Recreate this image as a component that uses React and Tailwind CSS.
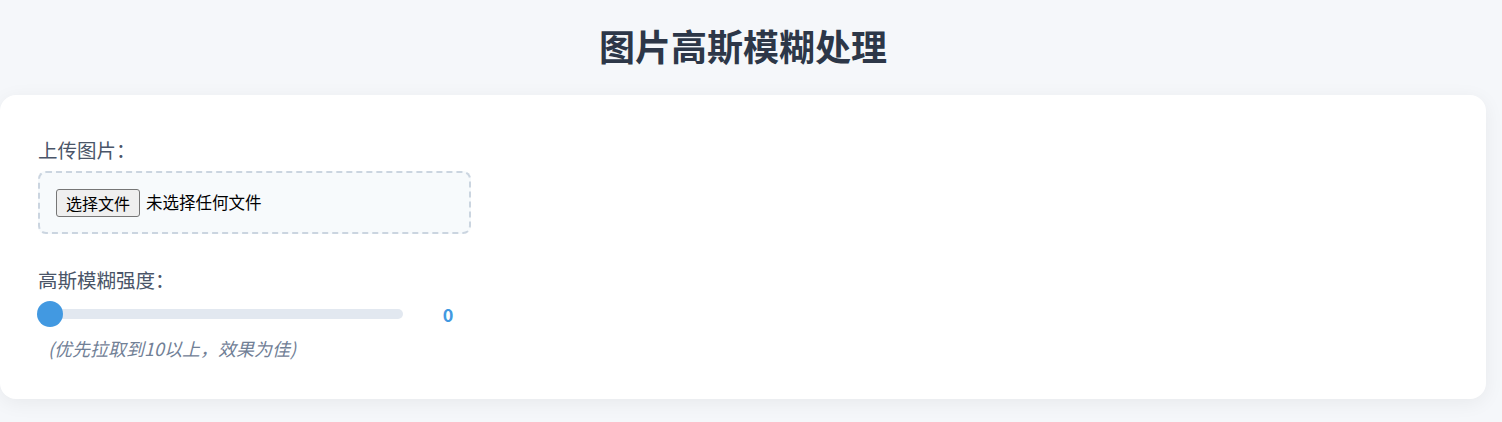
const font = { fontFamily: '"Noto Sans CJK SC", "Noto Sans", sans-serif' };

const Slider = ({ value }) => (
    <div className="flex items-center h-[26px]">
        <div className="relative w-[365px] h-[10px] rounded-full bg-[#e2e8f0]">
            {/* thumb sits over the track */}
            <div className="absolute -left-px top-1/2 -translate-y-1/2 w-[26px] h-[26px] rounded-full bg-[#4299e1]" />
        </div>
        <span className="ml-[20px] min-w-[50px] text-center text-[18px] font-bold text-[#4299e1]">{value}</span>
    </div>
);

const App = () => {
    return (
        <div className="min-h-screen bg-[#f5f7fa] pt-[24px]" style={font}>
            <h1 className="w-[1486px] text-center text-[36px] leading-[43px] font-bold text-[#2d3748] mb-[28px]">
                图片高斯模糊处理
            </h1>

            <div className="w-[1486px] bg-white rounded-[16px] shadow-[0_4px_20px_rgba(0,0,0,0.06)] pt-[41px] pb-[38px] px-[38px]">
                <label className="block text-[19.5px] leading-[27px] text-[#4a5568] mb-2">上传图片：</label>
                <div className="w-[433px] h-[63px] flex items-center px-4 border-2 border-dashed border-[#cbd5e0] rounded-[8px] bg-[#f7fafc]">
                    <button className="h-[28px] px-[9px] text-[16px] leading-none text-black bg-[#efefef] border border-[#767676] rounded-[3px]">
                        选择文件
                    </button>
                    <span className="ml-[6px] text-[16.5px] text-black">未选择任何文件</span>
                </div>

                <label className="block mt-[32px] text-[19.5px] leading-[27px] text-[#4a5568]">高斯模糊强度：</label>
                <div className="mt-2">
                    <Slider value={0} />
                </div>
                <p className="mt-[9px] pl-[10px] text-[18px] leading-[25px] italic text-[#718096]">
                    (优先拉取到10以上，效果为佳)
                </p>
            </div>
        </div>
    );
};

export default App;
